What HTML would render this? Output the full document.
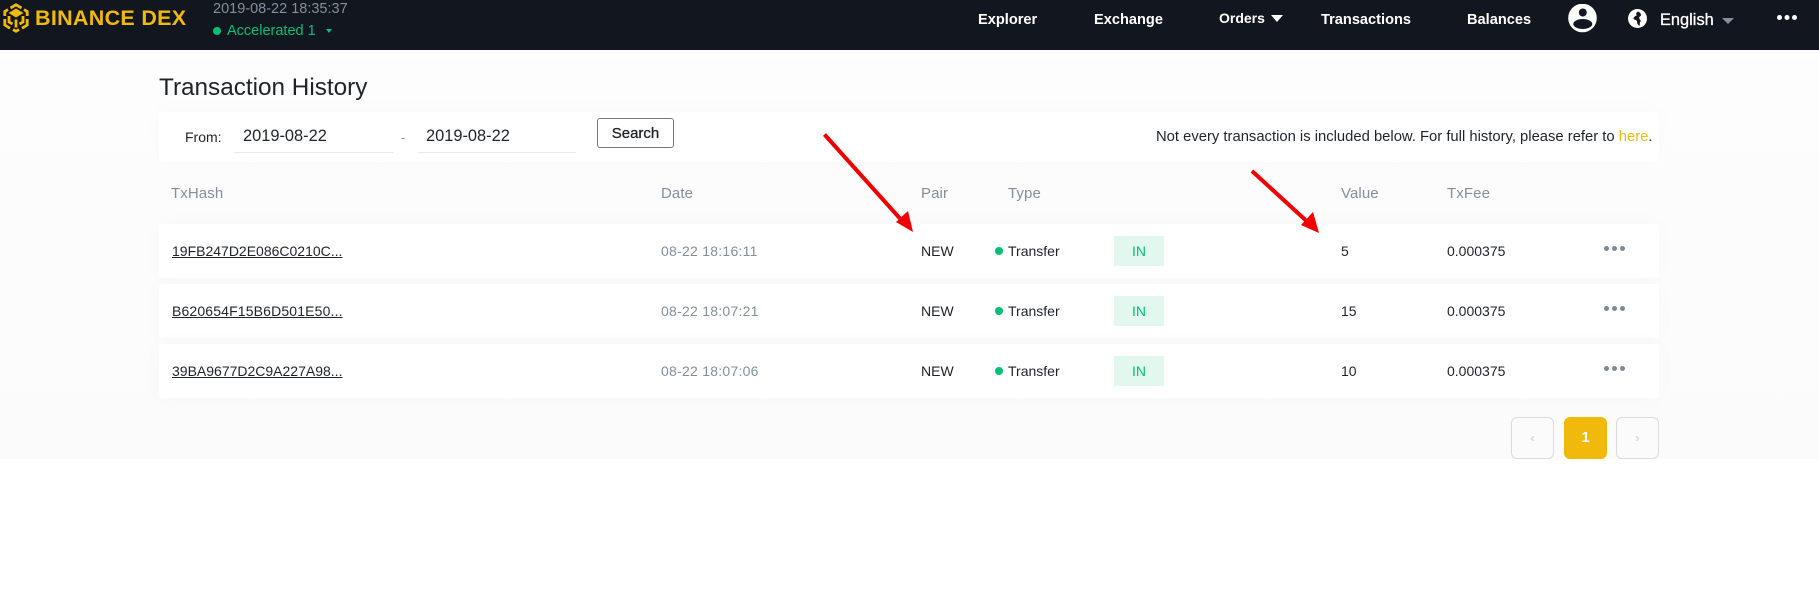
<!DOCTYPE html>
<html><head><meta charset="utf-8"><title>Transaction History</title>
<style>
html,body{margin:0;padding:0;background:#fff;}
body{width:1819px;height:613px;position:relative;overflow:hidden;font-family:"Liberation Sans",sans-serif;color:#1e2329;}
.t{position:absolute;white-space:nowrap;line-height:20px;height:20px;}
.nav{color:#fff;font-size:14.6px;font-weight:bold;}
.hd{color:#848e9c;font-size:15px;letter-spacing:.1px;}
.card{position:absolute;left:159px;width:1500px;background:#fff;border-radius:3px;box-shadow:0 0 24px rgba(0,0,0,.025);}
.hash{font-size:14px;text-decoration:underline;color:#1e2329;left:172px;}
.date{font-size:14px;color:#848e9c;left:661px;letter-spacing:.25px;}
.c{font-size:14px;color:#1e2329;}
.dot{position:absolute;left:995px;width:8px;height:8px;border-radius:50%;background:#02c076;}
.in{position:absolute;left:1114px;width:50px;height:30px;line-height:31px;text-align:center;background:#e2f8ef;color:#02c076;font-size:14px;}
.more{position:absolute;left:1604px;width:5px;height:5px;border-radius:50%;background:#7d8899;box-shadow:8px 0 0 #7d8899,16px 0 0 #7d8899;}
.pg{position:absolute;top:417px;width:41px;height:40px;border:1px solid #dcdcdc;border-radius:6px;text-align:center;line-height:40px;color:#c8c8c8;font-size:12px;}
</style></head><body>
<div style="position:absolute;left:0;top:50px;width:1819px;height:409px;background:linear-gradient(#fff 0,#fdfdfd 12px,#fbfbfb 100%);"></div>
<div style="position:absolute;left:0;top:0;width:1819px;height:50px;background:#12161e;"></div>

<svg style="position:absolute;left:3px;top:3px" width="27" height="30" viewBox="0 0 27 30" fill="none" stroke="#f0b90b" stroke-width="2.8">
<path d="M7.500 5 13 1.800 18.500 5M1.800 13V8.500L5 6.600M24.200 13V8.500L21 6.600M1.800 16V22L7 25.300M24.200 16V22L19 25.300M10 26.500 13 28.300 16 26.500"/>
<path d="M13 5.500 20.500 10 13 14.500 5.500 10Z" fill="#f0b90b" stroke="none"/>
<path d="M6 13V19L9.500 21M20 13V19L16.500 21M13 16.500V24.500"/>
</svg>
<div class="t" style="left:35px;top:8px;font-size:21.5px;font-weight:bold;color:#f0b90b;letter-spacing:.3px;">BINANCE DEX</div>
<div class="t" style="left:213px;top:-1px;font-size:14.5px;color:#848e9c;">2019-08-22 18:35:37</div>
<div style="position:absolute;left:213px;top:27px;width:8px;height:8px;border-radius:50%;background:#02c076;"></div>
<div class="t" style="left:227px;top:21px;font-size:14.5px;color:#02c076;">Accelerated 1</div>
<div style="position:absolute;left:326px;top:29px;border:3px solid transparent;border-top:4px solid #02c076;border-bottom:0;"></div>

<div class="t nav" style="left:978px;top:10px;">Explorer</div>
<div class="t nav" style="left:1094px;top:10px;">Exchange</div>
<div class="t nav" style="left:1219px;top:8px;font-size:14px;">Orders</div>
<div style="position:absolute;left:1271px;top:15px;border:6.500px solid transparent;border-top:7px solid #fff;border-bottom:0;"></div>
<div class="t nav" style="left:1321px;top:10px;">Transactions</div>
<div class="t nav" style="left:1467px;top:10px;">Balances</div>
<svg style="position:absolute;left:1568px;top:4px" width="29" height="29" viewBox="0 0 29 29"><circle cx="14.500" cy="14" r="14.300" fill="#fff"/><circle cx="14.800" cy="8.500" r="4" fill="#12161e"/><ellipse cx="14.800" cy="20" rx="9.500" ry="5" fill="#12161e"/></svg>
<svg style="position:absolute;left:1628px;top:9px" width="19" height="19" viewBox="0 0 19 19"><circle cx="9.500" cy="9.500" r="9.500" fill="#fff"/><path d="M10 2.500C8.500 3.500 7.500 4.800 8.800 6.200 7 7.200 5.200 8.200 5.500 10 7 11 9.200 11 9.200 13 8.800 14.800 10 16 11.800 16.800 11.800 15 11.500 13 13 12 11.700 10 10.200 8.500 12 7.500 14 6.500 12.800 3.500 10 2.500Z" fill="#12161e"/></svg>
<div class="t nav" style="left:1660px;top:10px;font-size:16.400px;font-weight:normal;-webkit-text-stroke:.3px #fff;">English</div>
<div style="position:absolute;left:1722px;top:18px;border:6px solid transparent;border-top:6px solid #848e9c;border-bottom:0;"></div>
<div style="position:absolute;left:1777px;top:15px;width:5px;height:5px;border-radius:50%;background:#fff;box-shadow:7.500px 0 0 #fff,15px 0 0 #fff;"></div>

<div class="t" style="left:159px;top:73px;font-size:24.300px;line-height:30px;height:30px;color:#1e2329;">Transaction History</div>

<div class="card" style="top:112px;height:50px;"></div>
<div class="t" style="left:185px;top:127px;font-size:14px;">From:</div>
<div class="t" style="left:243px;top:126px;font-size:16.400px;">2019-08-22</div>
<div style="position:absolute;left:234px;top:152px;width:159px;height:1px;background:#e6e8ea;"></div>
<div class="t" style="left:401px;top:128px;font-size:13px;color:#848e9c;">-</div>
<div class="t" style="left:426px;top:126px;font-size:16.400px;">2019-08-22</div>
<div style="position:absolute;left:418px;top:152px;width:158px;height:1px;background:#e6e8ea;"></div>
<div style="position:absolute;left:597px;top:118px;width:75px;height:28px;border:1px solid #6e7a8a;border-radius:3px;text-align:center;line-height:30px;font-size:15px;color:#1e2329;-webkit-text-stroke:.3px #1e2329;">Search</div>
<div class="t" style="left:1156px;top:127px;font-size:14.800px;">Not every transaction is included below. For full history, please refer to <span style="color:#f0b90b">here</span>.</div>

<div class="t hd" style="left:171px;top:184px;">TxHash</div>
<div class="t hd" style="left:661px;top:184px;">Date</div>
<div class="t hd" style="left:921px;top:184px;">Pair</div>
<div class="t hd" style="left:1008px;top:184px;">Type</div>
<div class="t hd" style="left:1341px;top:184px;">Value</div>
<div class="t hd" style="left:1447px;top:184px;">TxFee</div>

<div class="card" style="top:224px;height:54px;"></div>
<div class="card" style="top:284px;height:54px;"></div>
<div class="card" style="top:344px;height:54px;"></div>

<div class="t hash" style="top:241px;">19FB247D2E086C0210C...</div>
<div class="t date" style="top:241px;">08-22 18:16:11</div>
<div class="t c" style="left:921px;top:241px;">NEW</div>
<div class="dot" style="top:247px;"></div>
<div class="t c" style="left:1008px;top:241px;">Transfer</div>
<div class="in" style="top:236px;">IN</div>
<div class="t c" style="left:1341px;top:241px;">5</div>
<div class="t c" style="left:1447px;top:241px;">0.000375</div>
<div class="more" style="top:246px;"></div>

<div class="t hash" style="top:301px;letter-spacing:.15px;">B620654F15B6D501E50...</div>
<div class="t date" style="top:301px;">08-22 18:07:21</div>
<div class="t c" style="left:921px;top:301px;">NEW</div>
<div class="dot" style="top:307px;"></div>
<div class="t c" style="left:1008px;top:301px;">Transfer</div>
<div class="in" style="top:296px;">IN</div>
<div class="t c" style="left:1341px;top:301px;">15</div>
<div class="t c" style="left:1447px;top:301px;">0.000375</div>
<div class="more" style="top:306px;"></div>

<div class="t hash" style="top:361px;">39BA9677D2C9A227A98...</div>
<div class="t date" style="top:361px;">08-22 18:07:06</div>
<div class="t c" style="left:921px;top:361px;">NEW</div>
<div class="dot" style="top:367px;"></div>
<div class="t c" style="left:1008px;top:361px;">Transfer</div>
<div class="in" style="top:356px;">IN</div>
<div class="t c" style="left:1341px;top:361px;">10</div>
<div class="t c" style="left:1447px;top:361px;">0.000375</div>
<div class="more" style="top:366px;"></div>

<div class="pg" style="left:1511px;">‹</div>
<div class="pg" style="left:1564px;background:#f0b90b;border-color:#f0b90b;color:#fff;font-size:15px;font-weight:bold;">1</div>
<div class="pg" style="left:1616px;">›</div>

<svg style="position:absolute;left:0;top:0" width="1819" height="613">
<path d="M824.500 134.500 905 224M1252 171 1312 226" stroke="#f00000" stroke-width="4" fill="none"/>
<path d="M913 232 896 222 908 211ZM1319 233 1301 225 1313 212Z" fill="#f00000"/>
</svg>
</body></html>
